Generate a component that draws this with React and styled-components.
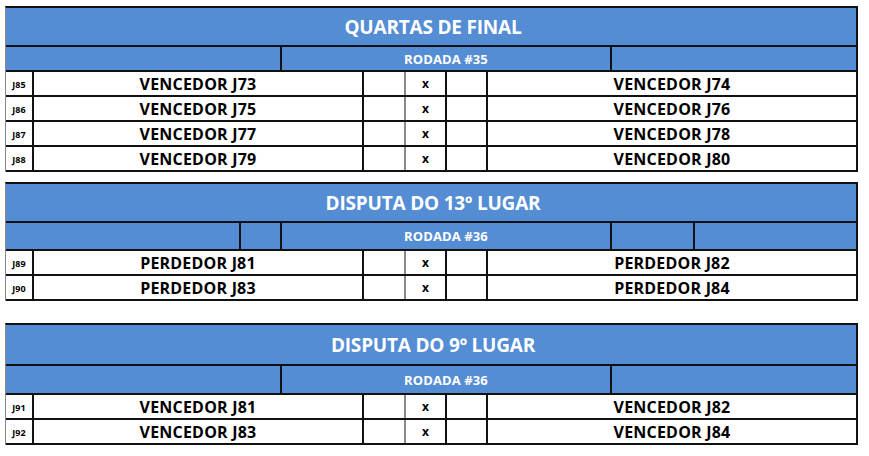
import React from 'react';
import styled, { createGlobalStyle } from 'styled-components';

const GlobalStyle = createGlobalStyle`
  body {
    margin: 0;
    background: #fff;
    font-family: 'Open Sans', 'Liberation Sans', sans-serif;
  }
`;

const Page = styled.div`
  padding: 6px 0 0 5px;
  display: flex;
  flex-direction: column;
`;

const Card = styled.div`
  width: 853px;
  box-sizing: border-box;
  margin-top: ${p => p.gap || 0}px;
  border-top: 2px solid #111;
  border-right: 2px solid #111;
  border-left: 1px solid #8a8a8a;
`;

const TitleRow = styled.div`
  height: ${p => p.h}px;
  box-sizing: border-box;
  background: #548dd4;
  border-bottom: 2px solid #111;
  display: flex;
  align-items: center;
  justify-content: center;
  padding-left: 4px;
  color: #fff;
  font-weight: 700;
  font-size: 19px;
  letter-spacing: -0.2px;
`;

const SubRow = styled.div`
  height: ${p => p.h}px;
  box-sizing: border-box;
  background: #548dd4;
  border-bottom: 2px solid #111;
  display: grid;
  grid-template-columns: ${p => p.cols};
`;

const SubCell = styled.div`
  border-right: 2px solid #111;
  display: flex;
  align-items: center;
  justify-content: center;
  color: #fff;
  font-weight: 700;
  font-size: 13px;
  letter-spacing: 0.1px;
  &:last-child {
    border-right: none;
  }
`;

const MatchRow = styled.div`
  height: 25px;
  box-sizing: border-box;
  border-bottom: 2px solid #111;
  display: grid;
  grid-template-columns: 28px 330px 42px 41px 41px 1fr;
`;

const Cell = styled.div`
  border-right: 2px solid ${p => (p.soft ? '#8a8a8a' : '#111')};
  display: flex;
  align-items: center;
  justify-content: center;
  color: #000;
  font-weight: 700;
  font-size: 16px;
  letter-spacing: 0.2px;
  &:last-child {
    border-right: none;
  }
`;

const MatchId = styled(Cell)`
  font-size: 9px;
  letter-spacing: 0;
  padding-top: 2px;
`;

const Versus = styled(Cell)`
  font-size: 12px;
  letter-spacing: 0;
`;

const sections = [
  {
    title: 'QUARTAS DE FINAL',
    round: 'RODADA #35',
    titleH: 39,
    subH: 25,
    gap: 0,
    cols: ['276px', '330px', '1fr'],
    matches: [
      ['J85', 'VENCEDOR J73', 'VENCEDOR J74'],
      ['J86', 'VENCEDOR J75', 'VENCEDOR J76'],
      ['J87', 'VENCEDOR J77', 'VENCEDOR J78'],
      ['J88', 'VENCEDOR J79', 'VENCEDOR J80']
    ]
  },
  {
    title: 'DISPUTA DO 13º LUGAR',
    round: 'RODADA #36',
    titleH: 39,
    subH: 28,
    gap: 10,
    cols: ['235px', '41px', '330px', '83px', '1fr'],
    matches: [
      ['J89', 'PERDEDOR J81', 'PERDEDOR J82'],
      ['J90', 'PERDEDOR J83', 'PERDEDOR J84']
    ]
  },
  {
    title: 'DISPUTA DO 9º LUGAR',
    round: 'RODADA #36',
    titleH: 41,
    subH: 29,
    gap: 22,
    cols: ['276px', '330px', '1fr'],
    matches: [
      ['J91', 'VENCEDOR J81', 'VENCEDOR J82'],
      ['J92', 'VENCEDOR J83', 'VENCEDOR J84']
    ]
  }
];

const Section = ({ section }) => {
  // the round label sits in the 330px column of the sub header
  const roundIndex = section.cols.indexOf('330px');
  return (
    <Card gap={section.gap}>
      <TitleRow h={section.titleH}>{section.title}</TitleRow>
      <SubRow h={section.subH} cols={section.cols.join(' ')}>
        {section.cols.map((c, i) => (
          <SubCell key={i}>{i === roundIndex ? section.round : ''}</SubCell>
        ))}
      </SubRow>
      {section.matches.map(([id, home, away]) => (
        <MatchRow key={id}>
          <MatchId>{id}</MatchId>
          <Cell>{home}</Cell>
          <Cell soft />
          <Versus>x</Versus>
          <Cell />
          <Cell>{away}</Cell>
        </MatchRow>
      ))}
    </Card>
  );
};

const App = () => {
  return (
    <>
      <GlobalStyle />
      <Page>
        {sections.map(s => (
          <Section key={s.title} section={s} />
        ))}
      </Page>
    </>
  );
};

export default App;
